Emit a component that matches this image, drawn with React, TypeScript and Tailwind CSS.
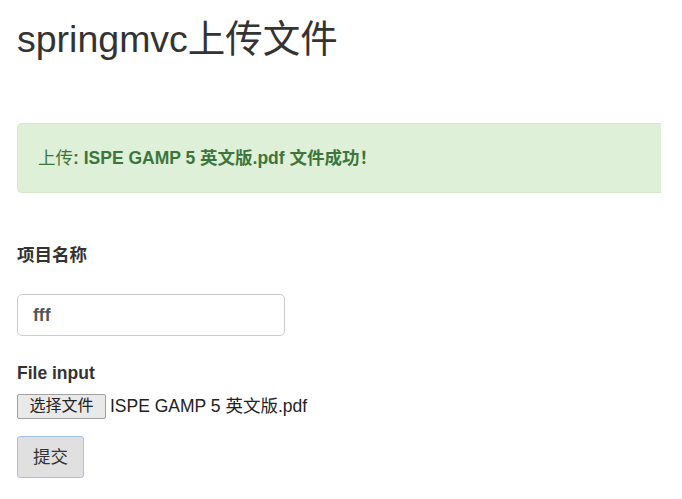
export default function App() {
  return (
    <div className="w-[682px] h-[499px] overflow-hidden bg-white pl-[17px] text-[#333] font-['Liberation_Sans','Noto_Sans_CJK_SC',sans-serif]">
      {/* Title */}
      <h2 className="mt-[19px] text-[37.5px] leading-[41px] font-normal whitespace-nowrap">
        springmvc上传文件
      </h2>

      {/* Success alert, clipped at the right like the page */}
      <div className="mt-[63px] h-[70px] w-[644px] flex items-center pl-[20px] bg-[#dff0d8] border border-r-0 border-[#d6e9c6] rounded-l-[5px] text-[#3c763d] text-[17.5px] font-bold overflow-hidden">
        <span className="whitespace-nowrap">
          <span className="font-normal">上传</span>: ISPE GAMP 5 英文版.pdf 文件成功！
        </span>
      </div>

      {/* Form */}
      <div className="mt-[50px] text-[17.5px] leading-[25px] font-bold">项目名称</div>
      <div className="mt-[26px] w-[268px] h-[42px] flex items-center px-[15px] border border-[#ccc] rounded-[5px] text-[17.5px] font-bold text-[#555]">
        fff
      </div>

      <div className="mt-[25px] text-[17.5px] leading-[25px] font-bold">File input</div>
      <div className="mt-[7px] flex items-center gap-[4px]">
        <button className="h-[25px] w-[89px] bg-[#e9e9e9] border border-[#a0a0a0] rounded-[2px] text-[16px] text-[#222] leading-none">
          选择文件
        </button>
        <span className="text-[17.5px] text-[#222] whitespace-nowrap">ISPE GAMP 5 英文版.pdf</span>
      </div>

      <button className="mt-[17px] h-[42px] w-[67px] bg-[#e0e0e0] border border-[#9fc0f0] rounded-[3px] text-[17.5px] text-[#333]">
        提交
      </button>
    </div>
  );
}
